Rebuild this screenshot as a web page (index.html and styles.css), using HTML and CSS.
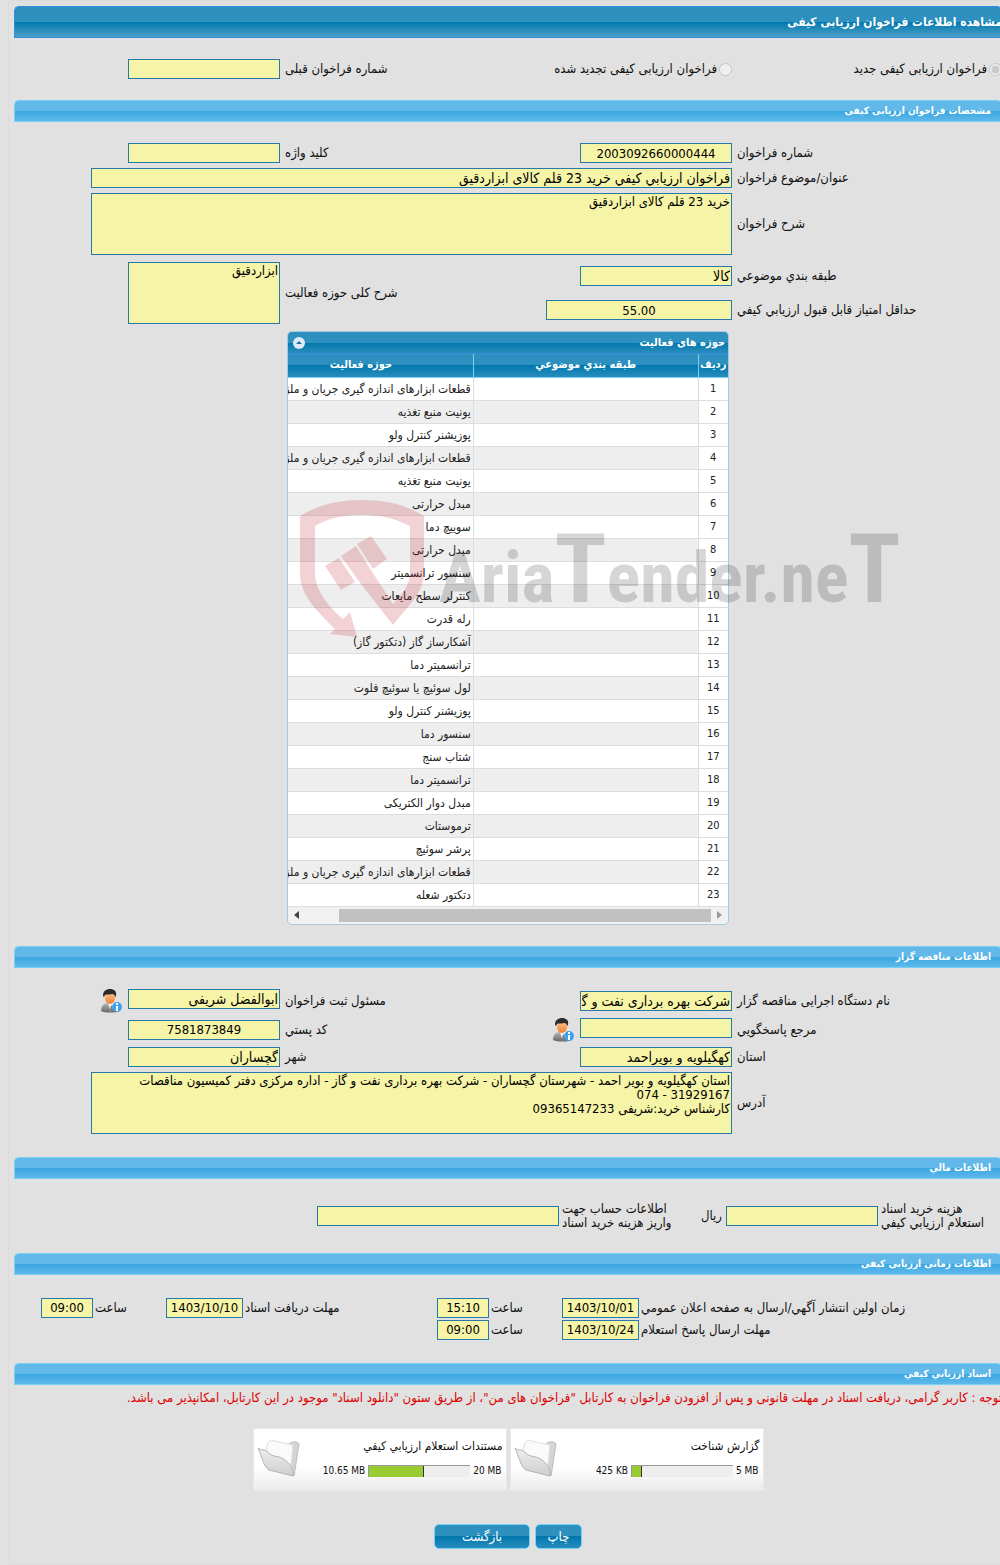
FILE: index.html
```html
<!DOCTYPE html>
<html lang="fa" dir="rtl">
<head>
    <meta charset="UTF-8">
    <meta name="viewport" content="width=device-width, initial-scale=1.0">
    <title>مشاهده اطلاعات فراخوان ارزیابی کیفی</title>
    <link rel="stylesheet" href="styles.css">
</head>
<body>
    <div class="page">
        <h1 class="main-title">مشاهده اطلاعات فراخوان ارزیابی کیفی</h1>

        <div class="form call-type">
            <div class="radio">
                <input type="radio" id="typeNew" name="callType" checked disabled>
                <label for="typeNew">فراخوان ارزیابی کیفی جدید</label>
            </div>
            <div class="radio">
                <input type="radio" id="typeRenewed" name="callType" disabled>
                <label for="typeRenewed">فراخوان ارزیابی کیفی تجدید شده</label>
            </div>
            <label for="prevNumber">شماره فراخوان قبلی</label>
            <input type="text" id="prevNumber" readonly>
        </div>

        <h2 class="section-title">مشخصات فراخوان ارزیابی کیفی</h2>
        <div class="form details">
            <label for="callNumber">شماره فراخوان</label>
            <input type="text" id="callNumber" class="center" value="2003092660000444" readonly>
            <label for="keyword">کلید واژه</label>
            <input type="text" id="keyword" readonly>

            <label for="subject">عنوان/موضوع فراخوان</label>
            <input type="text" id="subject" class="wide" value="فراخوان ارزيابي كيفي خرید 23 قلم کالای ابزاردقیق" readonly>

            <label for="description">شرح فراخوان</label>
            <textarea id="description" class="wide" readonly>خرید 23 قلم کالای ابزاردقیق</textarea>
        </div>
        <div class="form category">
            <label for="category">طبقه بندي موضوعي</label>
            <input type="text" id="category" value="کالا" readonly>
            <label for="field" class="tall">شرح کلی حوزه فعالیت</label>
            <textarea id="field" class="tall" readonly>ابزاردقیق</textarea>
            <label for="minScore">حداقل امتیاز قابل قبول ارزیابي کیفي</label>
            <input type="text" id="minScore" class="center score" value="55.00" readonly>
        </div>

        <div class="grid">
            <div class="grid-caption">
                <span>حوزه های فعالیت</span>
                <button type="button" class="collapse" aria-label="بستن">
                    <svg width="12" height="12" viewBox="0 0 12 12"><circle cx="6" cy="6" r="6" fill="#dcebf7"/><path d="M3 7L6 4L9 7Z" fill="#1c6f9f"/></svg>
                </button>
            </div>
            <div class="grid-view">
                <table>
                    <thead>
                        <tr><th class="num">ردیف</th><th>طبقه بندي موضوعي</th><th>حوزه فعالیت</th></tr>
                    </thead>
                    <tbody>
                        <tr><td>1</td><td></td><td>قطعات ابزارهای اندازه گیری جریان و ملزومات</td></tr>
                        <tr><td>2</td><td></td><td>یونیت منبع تغذیه</td></tr>
                        <tr><td>3</td><td></td><td>پوزیشنر کنترل ولو</td></tr>
                        <tr><td>4</td><td></td><td>قطعات ابزارهای اندازه گیری جریان و ملزومات</td></tr>
                        <tr><td>5</td><td></td><td>یونیت منبع تغذیه</td></tr>
                        <tr><td>6</td><td></td><td>مبدل حرارتی</td></tr>
                        <tr><td>7</td><td></td><td>سوییچ دما</td></tr>
                        <tr><td>8</td><td></td><td>مبدل حرارتی</td></tr>
                        <tr><td>9</td><td></td><td>سنسور ترانسمیتر</td></tr>
                        <tr><td>10</td><td></td><td>کنترلر سطح مایعات</td></tr>
                        <tr><td>11</td><td></td><td>رله قدرت</td></tr>
                        <tr><td>12</td><td></td><td>آشکارساز گاز (دتکتور گاز)</td></tr>
                        <tr><td>13</td><td></td><td>ترانسمیتر دما</td></tr>
                        <tr><td>14</td><td></td><td>لول سوئیچ یا سوئیچ فلوت</td></tr>
                        <tr><td>15</td><td></td><td>پوزیشنر کنترل ولو</td></tr>
                        <tr><td>16</td><td></td><td>سنسور دما</td></tr>
                        <tr><td>17</td><td></td><td>شتاب سنج</td></tr>
                        <tr><td>18</td><td></td><td>ترانسمیتر دما</td></tr>
                        <tr><td>19</td><td></td><td>مبدل دوار الکتریکی</td></tr>
                        <tr><td>20</td><td></td><td>ترموستات</td></tr>
                        <tr><td>21</td><td></td><td>پرشر سوئیچ</td></tr>
                        <tr><td>22</td><td></td><td>قطعات ابزارهای اندازه گیری جریان و ملزومات</td></tr>
                        <tr><td>23</td><td></td><td>دتکتور شعله</td></tr>
                    </tbody>
                </table>
            </div>
            <div class="scrollbar">
                <span class="arrow right"></span>
                <span class="thumb"></span>
                <span class="arrow left"></span>
            </div>
            <svg class="watermark" width="610" height="140" viewBox="0 0 610 140">
                <g fill="#be1e2d" fill-opacity="0.2">
                    <path d="M0 16C20 4 40 0 62 0S105 4 124 16V73C124 92 109 105 93 125L58 80L41 56L56 46L71 70L93 104C104 92 110 84 110 73V26C92 17 78 15 62 15S30 17 15 26V73C15 90 28 106 43 119L50 112L57 137L30 134L35 129C18 112 0 96 0 73Z"/>
                    <path d="M25 66L39 58L55 82L41 90Z"/>
                    <path d="M57 44L71 36L87 59L73 69Z"/>
                </g>
                <text x="139" y="102">Aria<tspan class="big">T</tspan>ender.ne<tspan class="big">T</tspan></text>
            </svg>
        </div>

        <h2 class="section-title">اطلاعات مناقصه گزار</h2>
        <div class="form owner">
            <label for="agency">نام دستگاه اجرایی مناقصه گزار</label>
            <input type="text" id="agency" value="شرکت بهره برداری نفت و گاز گچساران" readonly>
            <label for="registrar">مسئول ثبت فراخوان</label>
            <div class="with-icon">
                <input type="text" id="registrar" value="ابوالفضل شریفی" readonly>
                <button type="button" class="user-info" aria-label="مسئول ثبت فراخوان">
                    <svg width="24" height="24" viewBox="0 0 24 24">
                        <defs>
                            <linearGradient id="suit" x1="0" y1="0" x2="0" y2="1"><stop offset="0" stop-color="#b5b5b5"/><stop offset="1" stop-color="#6a6a6a"/></linearGradient>
                            <linearGradient id="face" x1="0" y1="0" x2="0" y2="1"><stop offset="0" stop-color="#ffc58a"/><stop offset="1" stop-color="#f08030"/></linearGradient>
                        </defs>
                        <path d="M1 22C1 17 4 14 8 14H14C18 14 20 17 20 22C15 24 5 24 1 22Z" fill="url(#suit)"/>
                        <path d="M8 14L11 23L15 14Z" fill="#fff"/>
                        <path d="M11 15L10 22L12 23L13 21Z" fill="#777"/>
                        <ellipse cx="10" cy="9" rx="5" ry="6" fill="url(#face)"/>
                        <path d="M3 7C3 2 6 0 10 0S17 2 16 7L15 8C15 6 14 5 12 5C9 6 6 5 5 6L4 8Z" fill="#2b2b2b"/>
                        <circle cx="17" cy="18" r="5" fill="#3fa2ec"/>
                        <path d="M16 17H18V22H16ZM16 14H18V16H16Z" fill="#fff"/>
                    </svg>
                </button>
            </div>

            <label for="contact">مرجع پاسخگویي</label>
            <div class="with-icon">
                <input type="text" id="contact" readonly>
                <button type="button" class="user-info" aria-label="مرجع پاسخگویي">
                    <svg width="24" height="24" viewBox="0 0 24 24">
                        <path d="M1 22C1 17 4 14 8 14H14C18 14 20 17 20 22C15 24 5 24 1 22Z" fill="url(#suit)"/>
                        <path d="M8 14L11 23L15 14Z" fill="#fff"/>
                        <path d="M11 15L10 22L12 23L13 21Z" fill="#777"/>
                        <ellipse cx="10" cy="9" rx="5" ry="6" fill="url(#face)"/>
                        <path d="M3 7C3 2 6 0 10 0S17 2 16 7L15 8C15 6 14 5 12 5C9 6 6 5 5 6L4 8Z" fill="#2b2b2b"/>
                        <circle cx="17" cy="18" r="5" fill="#3fa2ec"/>
                        <path d="M16 17H18V22H16ZM16 14H18V16H16Z" fill="#fff"/>
                    </svg>
                </button>
            </div>
            <label for="postcode">کد پستي</label>
            <input type="text" id="postcode" class="center" value="7581873849" readonly>

            <label for="province">استان</label>
            <input type="text" id="province" value="کهگیلویه و بویراحمد" readonly>
            <label for="city">شهر</label>
            <input type="text" id="city" value="گچساران" readonly>

            <label for="address">آدرس</label>
            <textarea id="address" class="wide" readonly>استان کهگیلویه و بویر احمد - شهرستان گچساران - شرکت بهره برداری نفت و گاز - اداره مرکزی دفتر کمیسیون مناقصات
31929167 - 074
کارشناس خرید:شریفی 09365147233</textarea>
        </div>

        <h2 class="section-title">اطلاعات مالي</h2>
        <div class="finance">
            <label for="docCost">هزینه خرید اسناد<br>استعلام ارزیابي کیفي</label>
            <input type="text" id="docCost" readonly>
            <span class="unit">ریال</span>
            <label for="account" class="account">اطلاعات حساب جهت<br>واریز هزینه خرید اسناد</label>
            <input type="text" id="account" class="account-box" readonly>
        </div>

        <h2 class="section-title">اطلاعات زمانی ارزیابی کیفی</h2>
        <div class="times">
            <label for="publishDate">زمان اولین انتشار آگهي/ارسال به صفحه اعلان عمومي</label>
            <input type="text" id="publishDate" class="center" value="1403/10/01" readonly>
            <label for="publishTime">ساعت</label>
            <input type="text" id="publishTime" class="center" value="15:10" readonly>
            <label for="receiveDate">مهلت دریافت اسناد</label>
            <input type="text" id="receiveDate" class="center" value="1403/10/10" readonly>
            <label for="receiveTime">ساعت</label>
            <input type="text" id="receiveTime" class="center" value="09:00" readonly>

            <label for="replyDate">مهلت ارسال پاسخ استعلام</label>
            <input type="text" id="replyDate" class="center" value="1403/10/24" readonly>
            <label for="replyTime">ساعت</label>
            <input type="text" id="replyTime" class="center" value="09:00" readonly>
        </div>

        <h2 class="section-title">اسناد ارزیابي کیفي</h2>
        <p class="notice">توجه : کاربر گرامی، دریافت اسناد در مهلت قانونی و پس از افزودن فراخوان به کارتابل "فراخوان های من"، از طریق ستون "دانلود اسناد" موجود در این کارتابل، امکانپذیر می باشد.</p>

        <div class="files">
            <div class="file">
                <div class="file-info">
                    <a href="#" class="file-name">گزارش شناخت</a>
                    <div class="usage" dir="ltr">
                        <span>425 KB</span>
                        <div class="bar"><div class="fill" style="width: 10%"></div></div>
                        <span>5 MB</span>
                    </div>
                </div>
                <svg class="folder" width="44" height="40" viewBox="0 0 44 40">
                    <defs>
                        <linearGradient id="flap" x1="0" y1="0" x2="0" y2="1"><stop offset="0" stop-color="#efefef"/><stop offset="1" stop-color="#cdcdcd"/></linearGradient>
                    </defs>
                    <path d="M31 6C34 2 40 2 42 5L37 37L30 30Z" fill="#d4d4d4" stroke="#bdbdbd"/>
                    <path d="M8 14L11 4L14 1L22 3L36 6L34 27L24 22Z" fill="#fafafa" stroke="#dedede"/>
                    <path d="M1 9C4 12 8 10 11 13C15 19 22 16 28 21C33 25 37 29 36 37L12 31C6 27 5 17 1 9Z" fill="url(#flap)" stroke="#b3b3b3"/>
                </svg>
            </div>
            <div class="file">
                <div class="file-info">
                    <a href="#" class="file-name">مستندات استعلام ارزیابي کیفي</a>
                    <div class="usage" dir="ltr">
                        <span>10.65 MB</span>
                        <div class="bar"><div class="fill" style="width: 54%"></div></div>
                        <span>20 MB</span>
                    </div>
                </div>
                <svg class="folder" width="44" height="40" viewBox="0 0 44 40">
                    <path d="M31 6C34 2 40 2 42 5L37 37L30 30Z" fill="#d4d4d4" stroke="#bdbdbd"/>
                    <path d="M8 14L11 4L14 1L22 3L36 6L34 27L24 22Z" fill="#fafafa" stroke="#dedede"/>
                    <path d="M1 9C4 12 8 10 11 13C15 19 22 16 28 21C33 25 37 29 36 37L12 31C6 27 5 17 1 9Z" fill="url(#flap)" stroke="#b3b3b3"/>
                </svg>
            </div>
        </div>

        <div class="actions">
            <button type="button" class="btn">چاپ</button>
            <button type="button" class="btn back">بازگشت</button>
        </div>
    </div>
</body>
</html>
```
FILE: styles.css
```css
* {
    box-sizing: border-box;
}

body {
    margin: 0;
    overflow-x: hidden;
    background-color: #e1e1e1;
    color: #111;
    font-family: Tahoma, "DejaVu Sans Condensed", "DejaVu Sans", sans-serif;
    font-size: 13px;
    line-height: 14px;
}

.page {
    margin-left: 8px;
    margin-right: -2px;
    padding: 5px 0 15px 5px;
    border: 1px solid #dcdcdc;
    border-right: none;
}

/* title bars */
.main-title {
    height: 32px;
    margin: 0;
    border: 1px solid #2e8fdf;
    border-right: none;
    border-radius: 5px 5px 0 0;
    background: linear-gradient(#2e90bf 0, #2e90bf 50%, #0078ae 50%, #4d9fc6 100%);
    color: #fff;
    font-size: 12px;
    line-height: 31px;
}

.section-title {
    height: 22px;
    margin: 0;
    padding-right: 11px;
    border: 1px solid #78d0f5;
    border-right: none;
    border-radius: 5px 5px 0 0;
    background: linear-gradient(#62b9e9 0, #62b9e9 50%, #39a7e1 50%, #5fb8ea 100%);
    color: #fff;
    font-size: 10px;
    line-height: 20px;
}

/* fields */
input,
textarea {
    font-family: inherit;
    color: #000;
}

input[type="text"] {
    flex-shrink: 0;
    width: 152px;
    height: 20px;
    padding: 0 1px;
    border: 1px solid #2779aa;
    background-color: #f6f4a6;
    font-size: 14px;
}

textarea {
    display: block;
    width: 152px;
    height: 62px;
    padding: 1px;
    border: 1px solid #2779aa;
    background-color: #f6f4a6;
    font-size: 13px;
    line-height: 14px;
    resize: none;
    overflow: hidden;
}

input[type="text"].center {
    text-align: center;
    direction: ltr;
    font-size: 13px;
}

.form {
    display: grid;
    grid-template-columns: 265px 179px 263px 1fr;
    gap: 5px;
    align-items: center;
}

.form > label {
    text-align: left;
}

.form .wide {
    grid-column: 2 / -1;
    width: 641px;
}

.call-type {
    padding: 21px 0;
}

.radio {
    display: flex;
    align-items: center;
    gap: 2px;
    white-space: nowrap;
}

.radio input {
    width: 13px;
    height: 13px;
    margin: 0;
}

.details {
    padding-top: 21px;
}

.category {
    grid-template-rows: 28px 28px;
    row-gap: 6px;
    padding-top: 7px;
}

.category .tall {
    grid-row: 1 / 3;
}

.category label.tall {
    grid-column: 3;
}

.category textarea.tall {
    grid-column: 4;
}

input[type="text"].score {
    width: 186px;
}

/* activity table */
.grid {
    position: relative;
    width: 442px;
    margin: 7px auto 21px;
    border: 1px solid #a6c9e2;
    border-radius: 5px;
    background-color: #f1f1f1;
}

.grid-caption {
    display: flex;
    align-items: center;
    justify-content: space-between;
    height: 22px;
    padding: 0 3px 0 5px;
    border-bottom: 1px solid #2e8fdf;
    border-radius: 4px 4px 0 0;
    background: linear-gradient(#2e90bf 0, #2e90bf 50%, #0078ae 50%, #2a8cbd 100%);
    color: #fff;
    font-size: 11px;
    font-weight: bold;
}

.collapse,
.user-info {
    display: flex;
    padding: 0;
    border: none;
    background: none;
    cursor: pointer;
}

.grid-view {
    overflow: hidden;
}

table {
    width: 480px;
    table-layout: fixed;
    border-collapse: collapse;
}

th {
    height: 23px;
    padding: 0;
    border-left: 1px solid #78d0f5;
    border-bottom: 1px solid #78d0f5;
    background: linear-gradient(#2e90bf 0, #2e90bf 50%, #0078ae 50%, #2a8cbd 100%);
    color: #fff;
    font-size: 11px;
}

th.num {
    width: 30px;
}

td {
    height: 23px;
    padding: 0 2px;
    border-left: 1px solid #ddd;
    border-bottom: 1px solid #ddd;
    background-color: #fff;
    color: #222;
    font-size: 12px;
    white-space: nowrap;
    overflow: hidden;
}

tr:nth-child(even) td {
    background-color: #eee;
}

tbody td:first-child,
tbody tr:nth-child(even) td:first-child {
    background-color: #fff;
    font-size: 11px;
    text-align: center;
}

.scrollbar {
    display: flex;
    align-items: center;
    height: 17px;
}

.arrow {
    width: 17px;
    height: 8px;
    background-color: #999;
    clip-path: polygon(6px 0, 11px 50%, 6px 100%);
}

.arrow.left {
    margin-right: auto;
    background-color: #444;
    clip-path: polygon(11px 0, 6px 50%, 11px 100%);
}

.thumb {
    width: 372px;
    height: 13px;
    background-color: #c1c1c1;
}

.watermark {
    position: absolute;
    top: 168px;
    left: 12px;
    pointer-events: none;
}

.watermark text {
    direction: ltr;
    fill: #000;
    fill-opacity: 0.16;
    font-family: "Liberation Sans Narrow", "Roboto Condensed", Roboto, sans-serif;
    font-size: 70px;
    font-weight: bold;
}

.watermark .big {
    font-size: 96px;
}

/* tender owner */
.owner {
    padding: 21px 0 23px;
}

.with-icon {
    display: flex;
    gap: 4px;
}

/* costs */
.finance {
    display: flex;
    align-items: center;
    padding: 23px 0;
}

.finance label {
    width: 121px;
    margin-left: 3px;
    text-align: left;
    white-space: nowrap;
}

.finance .unit {
    width: 22px;
    margin-right: 4px;
}

.finance .account {
    width: 110px;
    margin-right: 28px;
}

input[type="text"].account-box {
    width: 242px;
}

/* dates */
.times {
    display: grid;
    grid-template-columns: 361px 77px 69px 52px 190px 77px 69px 52px;
    gap: 2px;
    align-items: center;
    padding: 23px 0;
}

.times label {
    text-align: left;
}

.times input[type="text"] {
    width: 100%;
}

.notice {
    margin: 6px 0 23px;
    color: #d00;
    white-space: nowrap;
}

/* documents */
.files {
    display: flex;
    justify-content: center;
    gap: 3px;
    margin-bottom: 33px;
}

.file {
    display: flex;
    justify-content: space-between;
    width: 254px;
    height: 63px;
    padding: 10px 3px;
    border: 1px solid #e8e8e8;
    background: linear-gradient(#fff 60%, #ececec);
}

.file-info {
    flex: 1;
}

.file-name {
    display: block;
    height: 14px;
    color: #111;
    font-size: 12px;
    text-decoration: none;
}

.usage {
    display: flex;
    justify-content: flex-end;
    gap: 3px;
    margin-top: 12px;
    padding-right: 1px;
    font-size: 10px;
    line-height: 12px;
}

.bar {
    width: 102px;
    height: 12px;
    border-top: 1px solid #999;
    border-left: 1px solid #999;
    background-color: #eee;
}

.fill {
    height: 100%;
    border-right: 1px solid #333;
    background-color: #9c3;
}

/* buttons */
.actions {
    display: flex;
    justify-content: center;
    gap: 5px;
}

.btn {
    width: 47px;
    height: 25px;
    padding: 0;
    border: 1px solid #78d0f5;
    border-radius: 5px;
    background: linear-gradient(#2e90bf 0, #2e90bf 50%, #0078ae 50%, #2a8cbd 100%);
    color: #fff;
    font-family: inherit;
    font-size: 13px;
    cursor: pointer;
}

.btn.back {
    width: 96px;
}
```
